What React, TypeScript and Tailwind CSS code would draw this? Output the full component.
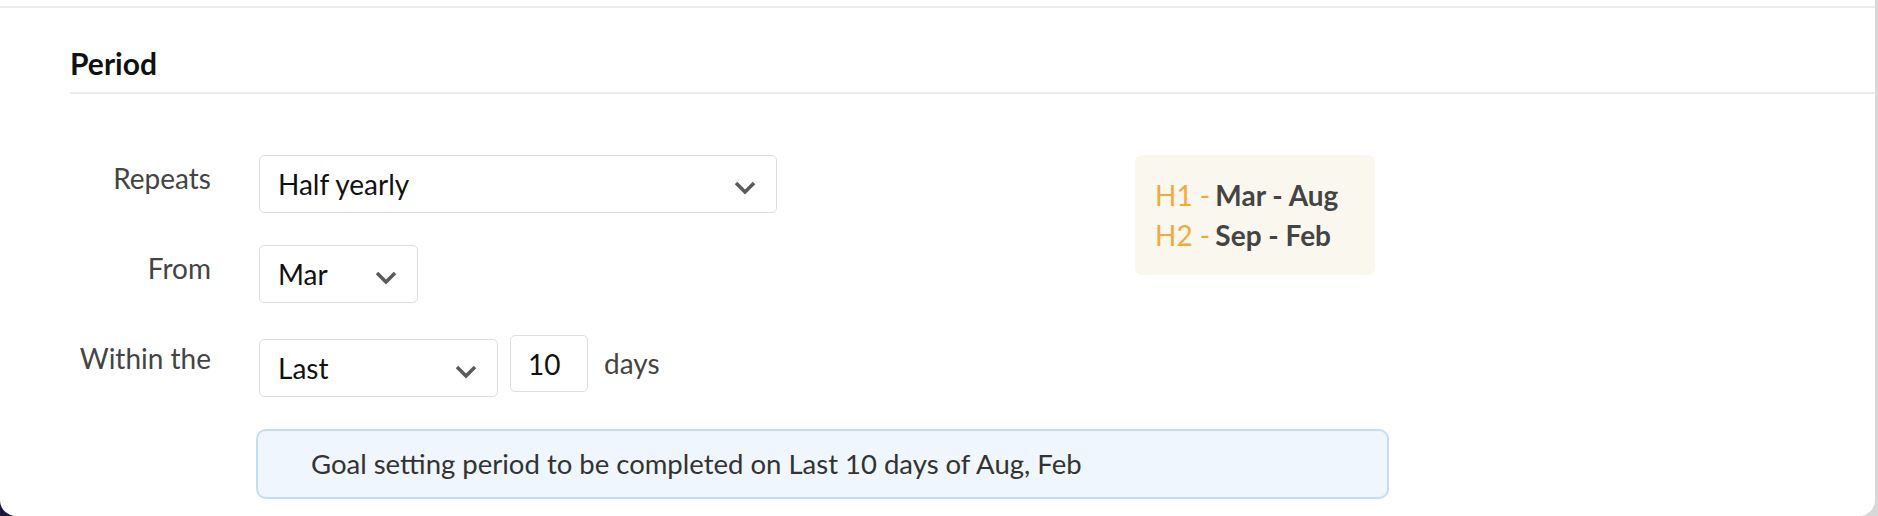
function Chevron() {
  return (
    <svg width="22" height="14" viewBox="0 0 22 14" className="mt-2 shrink-0">
      <polyline points="2,2 11,11 20,2" fill="none" stroke="#5a5a5a" strokeWidth="3.5" />
    </svg>
  );
}

function Select({ value, width, className = "" }: { value: string; width: string; className?: string }) {
  return (
    <div
      className={`flex items-center justify-between rounded-[5px] border border-[#dedede] bg-white py-2 pl-[18px] pr-5 ${width} ${className}`}
    >
      <span className="text-[28px] leading-10 text-[#111]">{value}</span>
      <Chevron />
    </div>
  );
}

function Row({ label, children }: { label: string; children: React.ReactNode }) {
  return (
    <div className="flex items-start gap-12">
      <div className="w-[141px] shrink-0 pt-[3px] text-right text-[28px] leading-10 text-[#444]">{label}</div>
      <div className="flex items-start">{children}</div>
    </div>
  );
}

export default function App() {
  return (
    <div className="h-[516px] w-[1878px] bg-[linear-gradient(to_right,#1b1740_50%,#d8d8d8_50%)] font-['Lato','Noto_Sans',sans-serif]">
      <div className="h-[516px] w-[1875px] overflow-hidden rounded-b-[16px] bg-white">
        <div className="h-[6px]" />
        <div className="border-t-2 border-[#ececec]" />

        <div className="ml-[70px] border-b-2 border-[#ececec] pb-[11px] pt-[37px]">
          <h2 className="text-[30px] font-bold leading-9 text-[#111]">Period</h2>
        </div>

        <div className="px-[70px] pt-[61px]">
          <div className="flex items-start">
            <div className="flex w-[1065px] flex-col gap-8">
              <Row label="Repeats">
                <Select value="Half yearly" width="w-[518px]" />
              </Row>
              <Row label="From">
                <Select value="Mar" width="w-[159px]" />
              </Row>
              <Row label="Within the">
                <Select value="Last" width="w-[239px]" className="mt-1" />
                <div className="ml-3 h-[57px] w-[78px] rounded-[5px] border border-[#dedede] py-2 pl-[17px] text-[28px] leading-10 text-[#111]">
                  10
                </div>
                <span className="ml-4 pt-2 text-[28px] leading-10 text-[#444]">days</span>
              </Row>
            </div>

            <div className="w-[240px] rounded-[7px] bg-[#faf8ee] px-5 py-5 text-[28px] leading-10">
              <div>
                <span className="text-[#f4aa3a]">H1 - </span>
                <span className="-ml-[2px] font-bold text-[#444]">Mar - Aug</span>
              </div>
              <div>
                <span className="text-[#f4aa3a]">H2 - </span>
                <span className="-ml-[2px] font-bold text-[#444]">Sep - Feb</span>
              </div>
            </div>
          </div>

          <div className="ml-[186px] mt-8 w-[1133px] rounded-[10px] border-2 border-[#c4dcf2] bg-[#eff6fd] py-[13px] pl-[53px] text-[27.5px] leading-10 text-[#333]">
            Goal setting period to be completed on Last 10 days of Aug, Feb
          </div>
        </div>
      </div>
    </div>
  );
}
